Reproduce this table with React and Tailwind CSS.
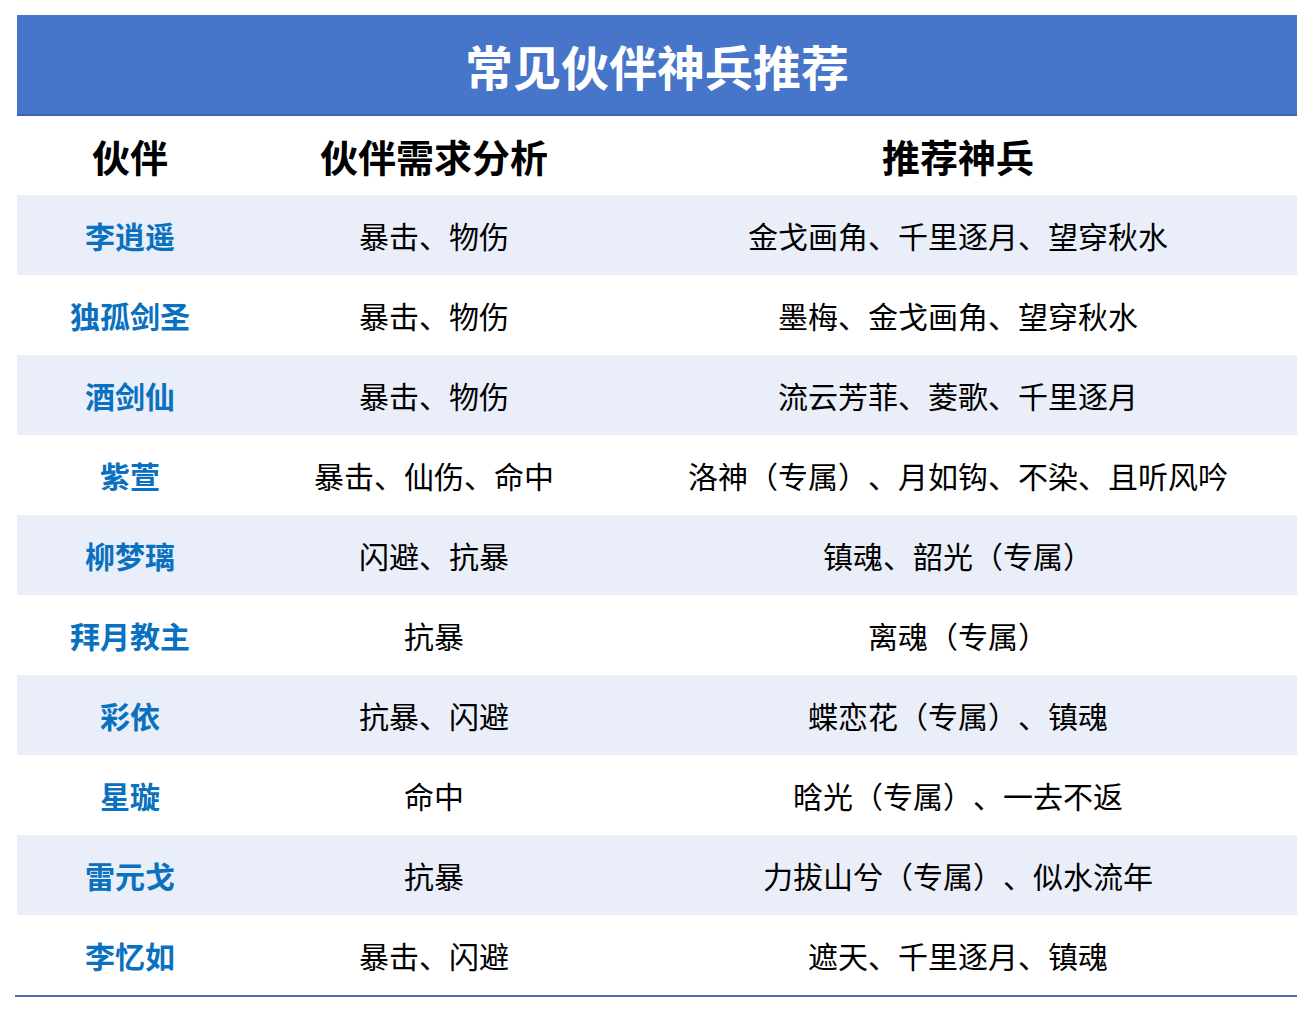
const rows = [
  ["李逍遥", "暴击、物伤", "金戈画角、千里逐月、望穿秋水"],
  ["独孤剑圣", "暴击、物伤", "墨梅、金戈画角、望穿秋水"],
  ["酒剑仙", "暴击、物伤", "流云芳菲、菱歌、千里逐月"],
  ["紫萱", "暴击、仙伤、命中", "洛神（专属）、月如钩、不染、且听风吟"],
  ["柳梦璃", "闪避、抗暴", "镇魂、韶光（专属）"],
  ["拜月教主", "抗暴", "离魂（专属）"],
  ["彩依", "抗暴、闪避", "蝶恋花（专属）、镇魂"],
  ["星璇", "命中", "晗光（专属）、一去不返"],
  ["雷元戈", "抗暴", "力拔山兮（专属）、似水流年"],
  ["李忆如", "暴击、闪避", "遮天、千里逐月、镇魂"],
];

const font = { fontFamily: '"Noto Sans CJK SC", "Noto Sans", sans-serif' };

export default function App() {
  return (
    <div className="w-[1312px] h-[1012px] bg-white pt-[15px] pl-[17px] [text-spacing-trim:space-all]" style={font}>
      <div className="w-[1280px]">
        <div className="h-[101px] bg-[#4775c9] flex items-center justify-center text-white font-bold text-[48px] leading-none border-b-2 border-[#3f66ad]">
          常见伙伴神兵推荐
        </div>
        <div className="grid grid-cols-[226px_382px_672px] h-[79px] items-center text-black font-bold text-[38px] leading-none">
          <div className="text-center">伙伴</div>
          <div className="text-center">伙伴需求分析</div>
          <div className="text-center pr-[6px]">推荐神兵</div>
        </div>
        {rows.map((r, i) => (
          <div
            key={i}
            className={`grid grid-cols-[226px_382px_672px] h-[80px] items-center text-[30px] leading-none ${i % 2 === 0 ? "bg-[#e9eef8]" : "bg-white"}`}
          >
            <div className="text-center font-bold text-[#0a70c0]">{r[0]}</div>
            <div className="text-center text-black">{r[1]}</div>
            <div className="text-center text-black pr-[6px]">{r[2]}</div>
          </div>
        ))}
        <div className="h-[2px] bg-[#4a6fa8] -ml-[2px]"></div>
      </div>
    </div>
  );
}
